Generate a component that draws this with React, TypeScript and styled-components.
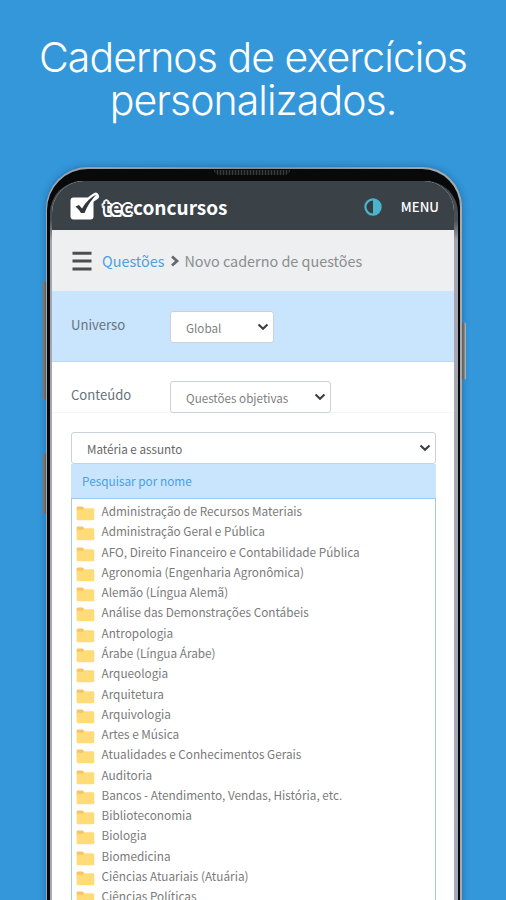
import React from "react";
import styled, { createGlobalStyle } from "styled-components";

const Global = createGlobalStyle`
  * { box-sizing: border-box; }
  html, body { margin: 0; height: 900px; overflow: hidden; background: #3397da; }
  body { font-family: "Noto Sans CJK SC", "Noto Sans", sans-serif; }
`;

const Page = styled.main`
  width: 506px;
  height: 900px;
  overflow: hidden;
  background: #3397da;
  display: flex;
  flex-direction: column;
`;

const Headline = styled.h1`
  margin: 0;
  height: 167px;
  padding-top: 36px;
  flex: none;
  display: flex;
  flex-direction: column;
  align-items: center;
  color: #fff;
  font: 300 41px/43px Inter, sans-serif;
  letter-spacing: -0.95px;
`;

const HeadlineLine = styled.span`
  white-space: nowrap;
`;

const Phone = styled.section`
  position: relative;
  flex: none;
  width: 416px;
  height: 780px;
  margin-left: 46px;
  padding: 2px 2px 0 1px;
  border-radius: 42px 40px 0 0;
  background: linear-gradient(90deg, #a5a6a8 0, #85878b 50%, #aaa 100%);
  box-shadow: 0 0 7px rgba(10, 60, 110, 0.45);
`;

const Bezel = styled.div`
  height: 100%;
  padding: 12px 2px 0 3px;
  border-radius: 41px 38px 0 0;
  background: #08090b;
`;

const Rim = styled.div`
  height: 100%;
  padding: 0 4px 0 2px;
  border-radius: 32px 32px 0 0;
  background: linear-gradient(180deg, #3a4147 0, #4c5156 40px, #a7a5b2 60px, #aaa8b6 100%);
`;

const Screen = styled.div`
  height: 100%;
  border-radius: 32px 30px 0 0;
  overflow: hidden;
  background: #fff;
`;

const Speaker = styled.i`
  position: absolute;
  left: 168px;
  top: 3px;
  width: 76px;
  height: 5px;
  border-radius: 0 0 5px 5px;
  background: repeating-linear-gradient(90deg, #3a3b3d 0 1px, #161719 1px 3px);
`;

const SideButton = styled.i<{ $side: "left" | "right"; $top: number; $height: number }>`
  position: absolute;
  ${(p) => p.$side}: -4px;
  top: ${(p) => p.$top}px;
  width: 4px;
  height: ${(p) => p.$height}px;
  border-radius: 2px;
  background: ${(p) =>
    p.$side === "left"
      ? "linear-gradient(90deg, #5b7f9b, #77797b 50%, #55585a)"
      : "linear-gradient(270deg, #a9c3ce, #77756f 50%, #55585a)"};
`;

const TopBar = styled.header`
  height: 49px;
  padding: 2px 15px 0 18px;
  display: flex;
  align-items: center;
  background: #3a4248;
  color: #fff;
`;

const Brand = styled.div`
  display: flex;
  align-items: center;
  flex: 1;
`;

const Wordmark = styled.span`
  display: flex;
  margin: 1px 0 0 3px;
  font-weight: 700;
  font-size: 19px;
  line-height: 26px;
  white-space: nowrap;
`;

const Outlined = styled.span`
  width: 30px;
  color: #3a4248;
  font-weight: 500;
  letter-spacing: 0.5px;
  text-shadow: 2px 0 #fff, -2px 0 #fff, 0 2px #fff, 0 -2px #fff, 1.5px 1.5px #fff,
    -1.5px 1.5px #fff, 1.5px -1.5px #fff, -1.5px -1.5px #fff;
`;

const MenuLabel = styled.span`
  margin-left: 19px;
  font-size: 13.2px;
  font-weight: 500;
`;

const Crumbs = styled.nav`
  height: 61px;
  padding: 0 0 0 20px;
  display: flex;
  align-items: center;
  background: #eeeff0;
  color: #8b8d8f;
  font-size: 14.4px;
  white-space: nowrap;
`;

const CrumbLink = styled.span`
  margin-left: 10px;
  color: #4f9fdd;
`;

const Field = styled.div<{ $tinted?: boolean }>`
  height: ${(p) => (p.$tinted ? 71 : 51)}px;
  padding: ${(p) => (p.$tinted ? "20px" : "19px")} 0 0 19px;
  display: flex;
  background: ${(p) => (p.$tinted ? "#c9e5fe" : "#fff")};
  border-bottom: ${(p) => (p.$tinted ? "1px solid #bddbf5" : "1px solid #f6f6f6")};
`;

const FieldLabel = styled.label`
  width: 99px;
  padding-top: 4px;
  color: #66727b;
  font-size: 13.1px;
  line-height: 20px;
`;

const Select = styled.div<{ $width: number; $wide?: boolean }>`
  width: ${(p) => p.$width}px;
  height: 32px;
  flex: none;
  padding: 0 ${(p) => (p.$wide ? 4 : 4)}px 0 15px;
  display: flex;
  align-items: center;
  justify-content: space-between;
  border: 1px solid #ccd1d5;
  border-radius: 3px;
  background: #fff;
  color: ${(p) => (p.$wide ? "#666" : "#7f7f7f")};
  font-size: 11.65px;
  white-space: nowrap;
`;

const Picker = styled.div`
  width: 365px;
  margin: 19px 0 0 19px;
`;

const Search = styled.div`
  height: 34px;
  padding: 0 11px;
  background: #c9e5fe;
  color: #4c9fe0;
  font-size: 11.8px;
  line-height: 34px;
`;

const List = styled.ul`
  margin: 0;
  padding: 2px 0 0 4px;
  height: 440px;
  list-style: none;
  border: 1px solid #9ccbf5;
`;

const Item = styled.li`
  height: 20.28px;
  display: flex;
  align-items: center;
  color: #7a7a7a;
  font-size: 11.78px;
  line-height: 20px;
  white-space: nowrap;
`;

const ItemName = styled.span`
  margin-left: 6.500px;
`;

const FolderSvg = styled.svg`
  flex: none;
  margin-top: 5px;
`;

const Folder = () => (
  <FolderSvg width="19" height="15" viewBox="0 0 19 15">
    <path d="M.6 3V1.800Q.6.500 2 .500h4.400q1 0 1.700 1.600L8 4.500H.600z" fill="#f6c565" />
    <path d="M.6 3.800h6L8.300 2.200H17q1.300 0 1.300 1.300v9.400q0 1.300-1.300 1.300H2Q.6 14.200.6 12.900z" fill="#ffdc78" />
  </FolderSvg>
);

const Chevron = () => (
  <svg width="12" height="8" viewBox="0 0 12 8">
    <path d="M1.500 1.500 6 5.700l4.500-4.200" fill="none" stroke="#404040" strokeWidth="2.200" />
  </svg>
);

const CheckLogo = () => (
  <svg width="30" height="29" viewBox="0 0 30 29">
    <rect x=".5" y="5.500" width="23" height="22" rx="3" fill="#fff" />
    <path d="M12 19Q17 9 25.500 4.200" fill="none" stroke="#fff" strokeWidth="7" strokeLinecap="round" strokeLinejoin="round" />
    <path d="M5.500 14.500 9 13l3 3.500Q17.500 7 26.500 2.600q-7.500 7.500-12 18.400H11Q9 17.500 5.500 14.500z" fill="#30383e" />
  </svg>
);

const Contrast = () => (
  <svg width="18" height="18" viewBox="0 0 18 18">
    <circle cx="9" cy="9" r="7.600" fill="#343d43" stroke="#4cb4ca" strokeWidth="2.200" />
    <path d="M9 1.400a7.600 7.600 0 0 1 0 15.200z" fill="#4cb4ca" />
  </svg>
);

const Burger = () => (
  <svg width="20" height="20" viewBox="0 0 20 20">
    <path d="M.5 2.300h19M.5 10.100h19M.5 17.900h19" stroke="#4b4d50" strokeWidth="3" />
  </svg>
);

const CrumbArrowSvg = styled.svg`
  margin: 0 4px 0 6px;
`;

const CrumbArrow = () => (
  <CrumbArrowSvg width="10" height="12" viewBox="0 0 10 12">
    <path d="M2 1.500 7 6l-5 4.500" fill="none" stroke="#66696b" strokeWidth="2.800" />
  </CrumbArrowSvg>
);

const subjects = [
  "Administração de Recursos Materiais",
  "Administração Geral e Pública",
  "AFO, Direito Financeiro e Contabilidade Pública",
  "Agronomia (Engenharia Agronômica)",
  "Alemão (Língua Alemã)",
  "Análise das Demonstrações Contábeis",
  "Antropologia",
  "Árabe (Língua Árabe)",
  "Arqueologia",
  "Arquitetura",
  "Arquivologia",
  "Artes e Música",
  "Atualidades e Conhecimentos Gerais",
  "Auditoria",
  "Bancos - Atendimento, Vendas, História, etc.",
  "Biblioteconomia",
  "Biologia",
  "Biomedicina",
  "Ciências Atuariais (Atuária)",
  "Ciências Políticas",
];

export default function App() {
  return (
    <Page>
      <Global />
      <Headline>
        <HeadlineLine>Cadernos de exercícios</HeadlineLine>
        <HeadlineLine>personalizados.</HeadlineLine>
      </Headline>
      <Phone>
        <SideButton $side="left" $top={114} $height={119} />
        <SideButton $side="left" $top={286} $height={61} />
        <SideButton $side="right" $top={155} $height={58} />
        <Speaker />
        <Bezel>
          <Rim>
            <Screen>
              <TopBar>
                <Brand>
                  <CheckLogo />
                  <Wordmark>
                    <Outlined>tec</Outlined>
                    <span>concursos</span>
                  </Wordmark>
                </Brand>
                <Contrast />
                <MenuLabel>MENU</MenuLabel>
              </TopBar>
              <Crumbs>
                <Burger />
                <CrumbLink>Questões</CrumbLink>
                <CrumbArrow />
                <span>Novo caderno de questões</span>
              </Crumbs>
              <Field $tinted>
                <FieldLabel>Universo</FieldLabel>
                <Select $width={104}>
                  Global
                  <Chevron />
                </Select>
              </Field>
              <Field>
                <FieldLabel>Conteúdo</FieldLabel>
                <Select $width={161}>
                  Questões objetivas
                  <Chevron />
                </Select>
              </Field>
              <Picker>
                <Select $width={365} $wide>
                  Matéria e assunto
                  <Chevron />
                </Select>
                <Search>Pesquisar por nome</Search>
                <List>
                  {subjects.map((name) => (
                    <Item key={name}>
                      <Folder />
                      <ItemName>{name}</ItemName>
                    </Item>
                  ))}
                </List>
              </Picker>
            </Screen>
          </Rim>
        </Bezel>
      </Phone>
    </Page>
  );
}
